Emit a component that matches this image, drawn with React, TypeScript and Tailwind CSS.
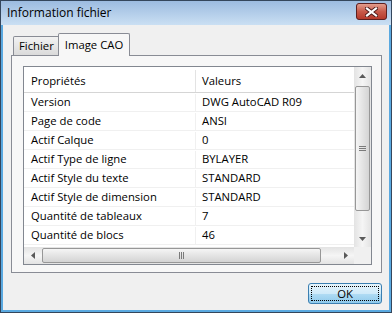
import React from "react";

const rows: [string, string][] = [
  ["Version", "DWG AutoCAD R09"],
  ["Page de code", "ANSI"],
  ["Actif Calque", "0"],
  ["Actif Type de ligne", "BYLAYER"],
  ["Actif Style du texte", "STANDARD"],
  ["Actif Style de dimension", "STANDARD"],
  ["Quantité de tableaux", "7"],
  ["Quantité de blocs", "46"],
];

function Arrow({ dir }: { dir: "up" | "down" | "left" | "right" }) {
  const pts = {
    up: "0,4 7,4 3.5,0",
    down: "0,0 7,0 3.5,4",
    left: "4,0 4,7 0,3.5",
    right: "0,0 0,7 4,3.5",
  }[dir];
  const vertical = dir === "up" || dir === "down";
  return (
    <svg width={vertical ? 7 : 4} height={vertical ? 4 : 7}>
      <polygon points={pts} fill="#5a5a5a" />
    </svg>
  );
}

export default function App() {
  return (
    <div
      className="w-[392px] h-[313px] flex flex-col border border-[#34465c] bg-[#5aa9e0] overflow-hidden"
      style={{ fontFamily: '"Open Sans", "Noto Sans", sans-serif' }}
    >
      {/* title bar */}
      <div className="h-[24px] shrink-0 flex items-center justify-between pl-[6px] pr-[4px] bg-[linear-gradient(to_bottom,#9cbbe0,#cadff3)]">
        <span className="text-[12px] text-black leading-none">Information fichier</span>
        <div className="w-[31px] h-[17px] -mt-[3px] rounded-[3px] border border-[#5c2020] bg-red-700 bg-[linear-gradient(to_bottom,#e39d8e,#c85a4a_50%,#b63a2c)] flex items-center justify-center">
          <svg width="13" height="10" viewBox="0 0 13 10">
            <path d="M2 1.5 L11 8.5 M11 1.5 L2 8.5" stroke="#4a1818" strokeWidth="4" strokeLinecap="square" />
            <path d="M2 1.5 L11 8.5 M11 1.5 L2 8.5" stroke="#ffffff" strokeWidth="2.2" strokeLinecap="square" />
          </svg>
        </div>
      </div>

      {/* body */}
      <div className="flex-1 mx-[2px] mb-[2px] bg-[#f0f0f0] flex flex-col pl-[8px] pr-[7px] pt-[8px] text-[11.3px] text-black">
        {/* tabs */}
        <div className="flex items-end h-[22px]">
          <div className="ml-[2px] h-[19px] px-[5px] flex items-center border border-b-0 border-[#898c95] rounded-t-[2px] bg-[linear-gradient(to_bottom,#f2f2f2,#dadada)]">
            Fichier
          </div>
          <div className="relative z-10 -ml-[2px] -mb-px h-[23px] px-[6px] flex items-center border border-b-0 border-[#898c95] rounded-t-[2px] bg-[#f7f7f7]">
            Image CAO
          </div>
        </div>

        {/* panel */}
        <div className="h-[218px] border border-[#898c95] bg-[#f7f7f7] pt-[10px] pl-[11px] pr-[9px] pb-[7px]">
          <div className="h-full border border-[#828790] bg-white flex flex-col">
            <div className="flex flex-1 min-h-0">
              <div className="flex-1 flex flex-col">
                {/* header */}
                <div className="h-[26px] pt-[3px] flex border-b border-[#d5d5d5] bg-white">
                  <div className="w-[172px] pl-[7px] flex items-center border-r border-[#e3e3e3]">Propriétés</div>
                  <div className="flex-1 pl-[6px] flex items-center">Valeurs</div>
                </div>
                {rows.map(([k, v]) => (
                  <div key={k} className="h-[19px] pt-px flex border-b border-[#f0f0f0]">
                    <div className="w-[172px] pl-[7px] flex items-center border-r border-[#f0f0f0]">{k}</div>
                    <div className="flex-1 pl-[6px] flex items-center">{v}</div>
                  </div>
                ))}
              </div>
              {/* vertical scrollbar */}
              <div className="w-[17px] flex flex-col bg-[linear-gradient(to_right,#e3e3e3,#f5f5f5_50%,#e3e3e3)]">
                <div className="h-[17px] flex items-center justify-center"><Arrow dir="up" /></div>
                <div className="mt-[2px] h-[125px] mx-[1px] rounded-[2px] border border-[#979797] bg-[linear-gradient(to_right,#f5f5f5,#e4e4e4_50%,#d4d4d4)] flex flex-col items-center justify-center gap-[1px]">
                  <div className="w-[7px] h-px bg-[#7a7a7a]" />
                  <div className="w-[7px] h-px bg-[#7a7a7a]" />
                  <div className="w-[7px] h-px bg-[#7a7a7a]" />
                </div>
                <div className="flex-1" />
                <div className="h-[17px] flex items-center justify-center"><Arrow dir="down" /></div>
              </div>
            </div>
            {/* horizontal scrollbar */}
            <div className="h-[17px] flex shrink-0">
              <div className="flex-1 flex bg-[linear-gradient(to_bottom,#e3e3e3,#f5f5f5_50%,#e3e3e3)]">
                <div className="w-[17px] flex items-center justify-center"><Arrow dir="left" /></div>
                <div className="ml-[1px] w-[279px] my-[1px] rounded-[2px] border border-[#979797] bg-[linear-gradient(to_bottom,#f5f5f5,#e4e4e4_50%,#d4d4d4)] flex items-center justify-center gap-[1px]">
                  <div className="h-[7px] w-px bg-[#7a7a7a]" />
                  <div className="h-[7px] w-px bg-[#7a7a7a]" />
                  <div className="h-[7px] w-px bg-[#7a7a7a]" />
                </div>
                <div className="flex-1" />
                <div className="w-[17px] flex items-center justify-center"><Arrow dir="right" /></div>
              </div>
              <div className="w-[17px] bg-[#f0f0f0]" />
            </div>
          </div>
        </div>

        {/* buttons */}
        <div className="flex justify-end mt-[10px]">
          <div className="w-[74px] h-[21px] rounded-[3px] border border-[#3c7fb1] bg-[linear-gradient(to_bottom,#e5f4fc,#cfeaf9_50%,#b1dcf4_51%,#8fcaec)] p-[2px]">
            <div className="w-full h-full border border-dotted border-black flex items-center justify-center leading-none">
              OK
            </div>
          </div>
        </div>
      </div>
    </div>
  );
}
